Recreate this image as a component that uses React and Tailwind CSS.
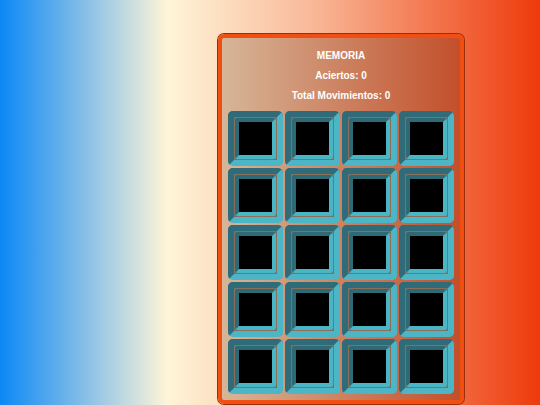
import { useState } from 'react';

const Card = () => (
  <div className="w-[55px] h-[55px] rounded-[5px] border-[6px] border-t-[#2f6b78] border-l-[#2f6b78] border-b-[#4cb6c6] border-r-[#4cb6c6] bg-[#5f7a78] p-px">
    <div className="w-full h-full rounded-[3px] border-4 border-t-[#2d6a76] border-l-[#2d6a76] border-b-[#4ab5c5] border-r-[#4ab5c5] bg-black shadow-[0_0_0_0.5px_#b8643a]" />
  </div>
);

export default function App() {
  const [aciertos] = useState(0);
  const [movimientos] = useState(0);
  const cards = Array.from({ length: 20 }, (_, i) => i);

  return (
    <div
      className="h-screen w-full overflow-hidden bg-[linear-gradient(to_right,#0b88f5_0%,#fff5d8_31%,#f8b898_58%,#ee3a0b_100%)] pl-[218px] pt-[34px]"
      style={{ fontFamily: '"Liberation Sans", Arial, sans-serif' }}
    >
      <div className="w-[246px] h-[370px] rounded-[6px] border-4 border-[#f04e12] shadow-[0_0_0_1px_#9c2f06] bg-[linear-gradient(to_right,#d6b698,#c34f2b)] px-[4px] pt-[8px]">
        <div className="flex flex-col items-center text-white font-bold text-[10px] leading-[20px]">
          <div>MEMORIA</div>
          <div>Aciertos: {aciertos}</div>
          <div>Total Movimientos: {movimientos}</div>
        </div>
        <div className="mt-[5px] grid grid-cols-4 gap-[2px] w-[226px] mx-auto">
          {cards.map((c) => (
            <Card key={c} />
          ))}
        </div>
      </div>
    </div>
  );
}
